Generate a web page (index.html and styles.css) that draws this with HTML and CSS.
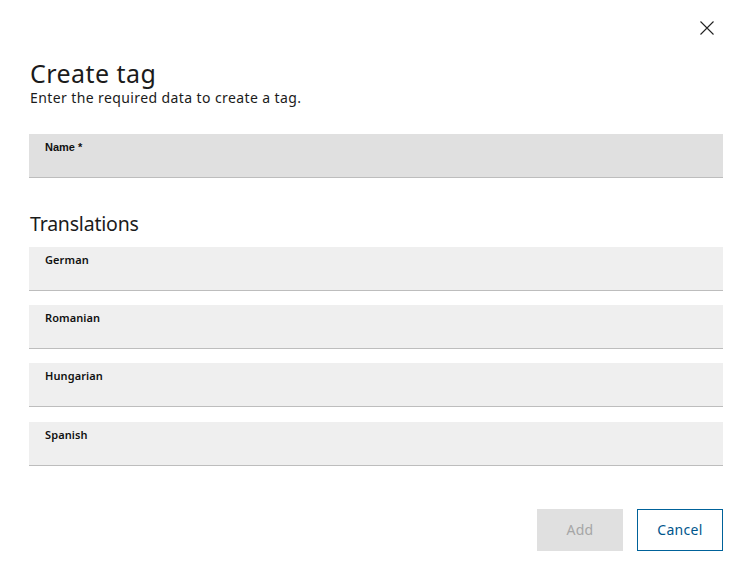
FILE: index.html
```html
<!DOCTYPE html>
<html lang="en">
<head>
<meta charset="utf-8">
<title>Create tag</title>
<link rel="stylesheet" href="styles.css">
</head>
<body>
<div class="dialog">
  <div class="close-row">
    <button class="close" aria-label="Close">
      <svg width="14" height="14" viewBox="0 0 14 14"><path d="M0.5 0.5L13.5 13.5M13.5 0.5L0.5 13.5" stroke="#222" stroke-width="1.1" fill="none"/></svg>
    </button>
  </div>
  <h1 class="title">Create tag</h1>
  <p class="subtitle">Enter the required data to create a tag.</p>
  <div class="field field-main"><span class="label label-main">Name *</span></div>
  <h2 class="section">Translations</h2>
  <div class="fields">
    <div class="field"><span class="label">German</span></div>
    <div class="field"><span class="label">Romanian</span></div>
    <div class="field"><span class="label">Hungarian</span></div>
    <div class="field"><span class="label">Spanish</span></div>
  </div>
  <div class="actions">
    <button class="btn btn-add" disabled>Add</button>
    <button class="btn btn-cancel">Cancel</button>
  </div>
</div>
</body>
</html>
```
FILE: styles.css
```css
html, body {
  margin: 0;
  padding: 0;
  background: #fff;
}
body {
  font-family: "Noto Sans", "Open Sans", sans-serif;
  color: #1b1b1b;
}
.dialog {
  padding: 0 29px;
  display: flex;
  flex-direction: column;
}
.close-row {
  display: flex;
  justify-content: flex-end;
  height: 58px;
}
.close {
  margin: 21px 9px 0 0;
  padding: 0;
  border: 0;
  background: none;
  width: 14px;
  height: 14px;
  display: block;
}
.close svg { display: block; }
.title {
  margin: 0 0 0 1px;
  font-size: 25px;
  line-height: 30px;
  font-weight: 400;
  letter-spacing: 0.45px;
}
.subtitle {
  margin: 0 0 0 1px;
  font-size: 14px;
  line-height: 20px;
  letter-spacing: 0.4px;
}
.field {
  background: #efefef;
  border-bottom: 1px solid #bdbdbd;
  padding: 6px 16px 0;
  box-sizing: border-box;
  height: 44px;
}
.field-main {
  margin-top: 26px;
  background: #e0e0e0;
}
.label {
  display: block;
  font-size: 11px;
  line-height: 14px;
  font-weight: 600;
  color: #111;
  letter-spacing: 0.1px;
}
.label-main {
  font-family: "Liberation Sans", Arial, sans-serif;
  font-weight: 700;
  letter-spacing: 0;
}
.section {
  margin: 32px 0 0 1px;
  font-size: 19.5px;
  line-height: 28px;
  font-weight: 400;
  letter-spacing: -0.2px;
}
.fields {
  margin-top: 9px;
  display: flex;
  flex-direction: column;
  gap: 14.2px;
}
.actions {
  margin-top: 43px;
  display: flex;
  justify-content: flex-end;
  gap: 14px;
}
.btn {
  width: 86px;
  height: 42px;
  font-family: "Noto Sans", "Open Sans", sans-serif;
  font-size: 14px;
  letter-spacing: 0.3px;
  box-sizing: border-box;
  padding: 0;
}
.btn-add {
  background: #e0e0e0;
  border: 0;
  color: #a6a6a6;
}
.btn-cancel {
  background: #fff;
  border: 1px solid #00629a;
  color: #00568c;
}
```
